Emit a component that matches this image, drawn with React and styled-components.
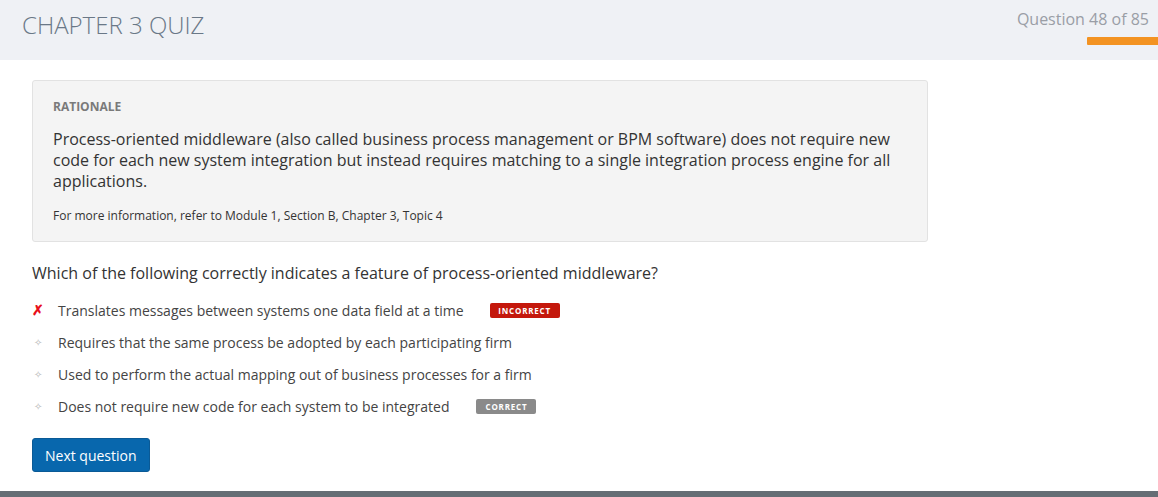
import React from "react";
import styled, { createGlobalStyle } from "styled-components";

const Global = createGlobalStyle`
  html, body { margin: 0; padding: 0; background: #fff; }
  body { font-family: "Open Sans", "Noto Sans", sans-serif; color: #333; }
  * { box-sizing: border-box; }
`;

const Page = styled.div`
  width: 1158px;
  height: 497px;
  display: flex;
  flex-direction: column;
  overflow: hidden;
`;

const Header = styled.header`
  height: 60px;
  background: #eff1f5;
  display: flex;
  justify-content: space-between;
  align-items: flex-start;
  padding-left: 22px;
`;

const Title = styled.h1`
  margin: 8px 0 0;
  font-size: 24px;
  font-weight: 300;
  color: #6a7887;
  letter-spacing: 0;
`;

const Progress = styled.div`
  display: flex;
  flex-direction: column;
  align-items: flex-end;
  padding-top: 8px;
`;

const ProgressText = styled.div`
  font-size: 16px;
  color: #9a9ea6;
  padding-right: 9px;
  line-height: 22px;
`;

const ProgressBar = styled.div`
  margin-top: 7px;
  width: 71px;
  height: 8px;
  background: #f39322;
  border-radius: 1px 0 0 1px;
`;

const Main = styled.main`
  flex: 1;
  padding: 20px 0 0 32px;
`;

const Rationale = styled.section`
  width: 896px;
  background: #f4f4f4;
  border: 1px solid #e2e2e2;
  border-radius: 3px;
  padding: 18px 20px 17px;
`;

const RationaleLabel = styled.div`
  font-size: 12px;
  font-weight: 700;
  color: #7a7a7a;
  line-height: 16px;
`;

const RationaleBody = styled.p`
  margin: 14px 0 0;
  font-size: 16px;
  line-height: 21px;
  color: #333;
`;

const RationaleRef = styled.p`
  margin: 16px 0 0;
  font-size: 12px;
  line-height: 16px;
  color: #333;
`;

const Question = styled.p`
  margin: 20px 0 0;
  font-size: 16px;
  line-height: 22px;
  color: #333;
`;

const Options = styled.ul`
  list-style: none;
  margin: 15px 0 0;
  padding: 0;
  display: flex;
  flex-direction: column;
  gap: 10px;
`;

const Option = styled.li`
  display: flex;
  align-items: center;
  height: 22px;
  font-size: 14px;
  color: #444;
`;

const Marker = styled.span`
  width: 26px;
  padding-left: ${(p) => (p.$wrong ? "0px" : "2px")};
  font-size: ${(p) => (p.$wrong ? "14px" : "10px")};
  color: ${(p) => (p.$wrong ? "#e8101a" : "#b8b8b8")};
  font-weight: ${(p) => (p.$wrong ? 700 : 400)};
  line-height: 1;
`;

const Badge = styled.span`
  margin-left: ${(p) => p.$offset}px;
  display: inline-flex;
  align-items: center;
  justify-content: center;
  height: 15px;
  padding: 0 8px;
  min-width: ${(p) => p.$width}px;
  font-size: 8px;
  font-weight: 700;
  letter-spacing: 0.8px;
  color: #fff;
  background: ${(p) => p.$bg};
  border-radius: 2px;
`;

const NextButton = styled.button`
  margin-top: 21px;
  height: 34px;
  padding: 0 12px;
  background: #0867ad;
  color: #fff;
  border: 1px solid #0a5a96;
  border-radius: 3px;
  font-family: "Open Sans", sans-serif;
  font-size: 14px;
  cursor: pointer;
`;

const Footer = styled.div`
  height: 6px;
  background: #656e75;
`;

const options = [
  { text: "Translates messages between systems one data field at a time", wrong: true, badge: { label: "INCORRECT", bg: "#c4180c", offset: 26, width: 70 } },
  { text: "Requires that the same process be adopted by each participating firm" },
  { text: "Used to perform the actual mapping out of business processes for a firm" },
  { text: "Does not require new code for each system to be integrated", badge: { label: "CORRECT", bg: "#8a8a8a", offset: 27, width: 60 } },
];

export default function App() {
  return (
    <Page>
      <Global />
      <Header>
        <Title>CHAPTER 3 QUIZ</Title>
        <Progress>
          <ProgressText>Question 48 of 85</ProgressText>
          <ProgressBar />
        </Progress>
      </Header>
      <Main>
        <Rationale>
          <RationaleLabel>RATIONALE</RationaleLabel>
          <RationaleBody>
            Process-oriented middleware (also called business process management or BPM software) does not require new
            code for each new system integration but instead requires matching to a single integration process engine for all
            applications.
          </RationaleBody>
          <RationaleRef>For more information, refer to Module 1, Section B, Chapter 3, Topic 4</RationaleRef>
        </Rationale>
        <Question>Which of the following correctly indicates a feature of process-oriented middleware?</Question>
        <Options>
          {options.map((o) => (
            <Option key={o.text}>
              <Marker $wrong={o.wrong}>{o.wrong ? "✗" : "✧"}</Marker>
              {o.text}
              {o.badge && (
                <Badge $bg={o.badge.bg} $offset={o.badge.offset} $width={o.badge.width}>
                  {o.badge.label}
                </Badge>
              )}
            </Option>
          ))}
        </Options>
        <NextButton>Next question</NextButton>
      </Main>
      <Footer />
    </Page>
  );
}
